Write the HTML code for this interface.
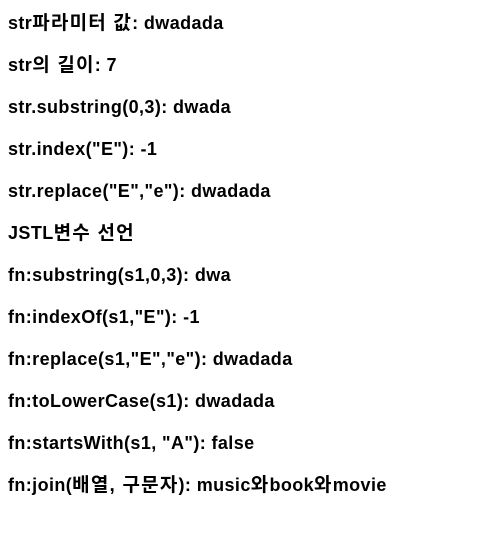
<!DOCTYPE html>
<html><head><meta charset="utf-8"><style>
body{margin:0;padding:12px 8px;background:#fff;color:#000;font-family:"Liberation Sans","Noto Sans CJK KR",sans-serif;font-weight:bold;font-size:18px;letter-spacing:0.4px;}
p{margin:0 0 19px;line-height:23px;white-space:nowrap}
.k{letter-spacing:1.2px;font-size:19px}
</style></head><body>
<p>str<span class="k">파라미터 값</span>: dwadada</p>
<p>str<span class="k">의 길이</span>: 7</p>
<p>str.substring(0,3): dwada</p>
<p>str.index("E"): -1</p>
<p>str.replace("E","e"): dwadada</p>
<p>JSTL<span class="k">변수 선언</span></p>
<p>fn:substring(s1,0,3): dwa</p>
<p>fn:indexOf(s1,"E"): -1</p>
<p>fn:replace(s1,"E","e"): dwadada</p>
<p>fn:toLowerCase(s1): dwadada</p>
<p>fn:startsWith(s1, "A"): false</p>
<p>fn:join(<span class="k">배열, 구문자</span>): music<span class="k">와</span>book<span class="k">와</span>movie</p>
</body></html>
